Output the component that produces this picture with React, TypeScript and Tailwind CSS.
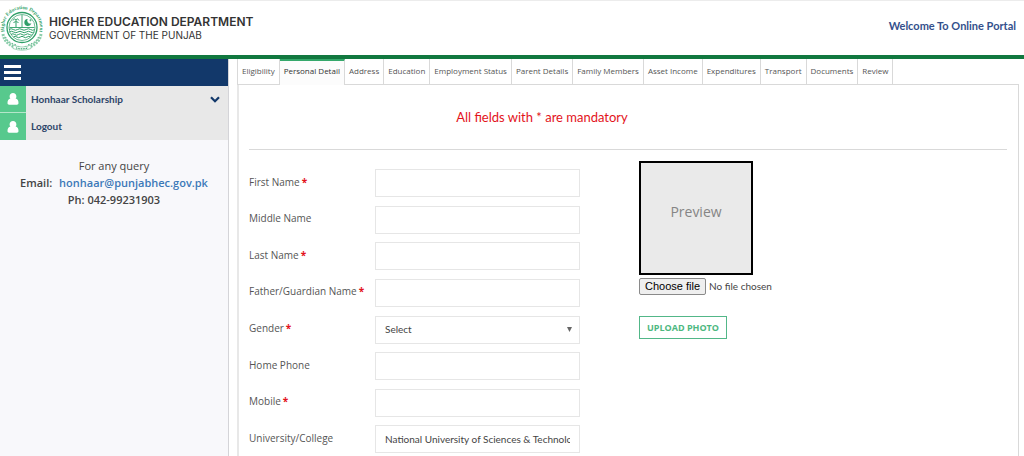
import { useState } from 'react';

const tabs = [
  'Eligibility',
  'Personal Detail',
  'Address',
  'Education',
  'Employment Status',
  'Parent Details',
  'Family Members',
  'Asset Income',
  'Expenditures',
  'Transport',
  'Documents',
  'Review',
];

type Field = {
  id: string;
  label: string;
  required?: boolean;
  kind?: 'select';
  value?: string;
};

const fields: Field[] = [
  { id: 'first-name', label: 'First Name', required: true },
  { id: 'middle-name', label: 'Middle Name' },
  { id: 'last-name', label: 'Last Name', required: true },
  { id: 'guardian-name', label: 'Father/Guardian Name', required: true },
  { id: 'gender', label: 'Gender', required: true, kind: 'select' },
  { id: 'home-phone', label: 'Home Phone' },
  { id: 'mobile', label: 'Mobile', required: true },
  { id: 'university', label: 'University/College', value: 'National University of Sciences & Technology' },
];

function Emblem() {
  return (
    <svg viewBox="0 0 44 46" className="h-[46px] w-11 shrink-0" fill="none" stroke="#2f9f68" aria-hidden="true">
      <circle cx="22" cy="22.5" r="15" strokeWidth="1.3" />
      <circle cx="22" cy="22.5" r="13" strokeWidth="0.7" />
      <path d="M22 10v13M9.5 22.5h25" strokeWidth="0.9" />
      <path d="M16 22v-7M13 15.500c1-2 2-2 3-.5 1-1.500 2-1.500 3 .5M13.500 18c1-1.500 2-1.500 2.500-1 .5-.5 1.500-.5 2.500 1" strokeWidth="1" />
      <path d="M27.500 14a3.500 3.500 0 1 0 3.700 4.600a3.200 3.200 0 0 1-3.700-4.600z" fill="#2f9f68" strokeWidth="0.2" />
      <path d="M30.500 14v2.400M29.300 15.200h2.400" strokeWidth="0.6" />
      <path
        d="M9 24.500q2.200-1.500 4.300 0t4.300 0 4.300 0 4.300 0 4.300 0 4.300 0M9.500 27q2.100-1.500 4.200 0t4.200 0 4.200 0 4.200 0 4.200 0 3.500 0M11 29.500q1.900-1.500 3.700 0t3.700 0 3.700 0 3.700 0 3.700 0 3 0M13.500 32q1.700-1.400 3.400 0t3.400 0 3.400 0 3.400 0 3.400 0"
        strokeWidth="1"
      />
      <path d="M3 29c1 7 7 13 16.500 13.500M41 29c-1 7-7 13-16.500 13.500" stroke="#8dceac" strokeWidth="3" strokeDasharray="2 1" />
      <path d="M5.500 32c2 4.500 6.500 7.500 12 8M38.500 32c-2 4.500-6.500 7.500-12 8" stroke="#69ba91" strokeWidth="1.200" strokeDasharray="1.500 1.500" />
      <path d="M13 40q9 4 18 0v3.500q-9 3.500-18 0z" fill="#fff" stroke="#69ba91" strokeWidth="0.6" />
      <path d="M16 42.800q6 2 12 0" strokeWidth="1.200" strokeDasharray="1 0.7" />
      <path id="emblem-arc" d="M5 28A18 18 0 1 1 39 28" stroke="none" />
      <text fill="#2f9f68" stroke="none" className="font-['Liberation_Serif',serif] text-[5px] font-bold">
        <textPath href="#emblem-arc" startOffset="50%" textAnchor="middle">
          Higher Education Department
        </textPath>
      </text>
    </svg>
  );
}

function UserIcon() {
  return (
    <svg viewBox="0 0 12 14" className="h-3.5 w-3" fill="#fff" aria-hidden="true">
      <path d="M6 1c2 0 3.400 1.500 3.400 3.400 0 .9-.3 1.600-.8 2.200 2 .4 2.900 2 2.900 4.400 0 1-.6 1.700-1.600 1.700H2.100C1.100 12.700.5 12 .5 11c0-2.400.9-4 2.900-4.400-.5-.6-.8-1.300-.8-2.200C2.600 2.500 4 1 6 1z" />
    </svg>
  );
}

function Sidebar() {
  return (
    <aside className="w-[229px] shrink-0 border-r border-[#d4d4d8] bg-[#f8f8fb]">
      <div className="flex h-[27px] items-center bg-[#12386a] px-1">
        <button type="button" aria-label="Toggle menu" className="flex w-[17px] flex-col gap-[3px]">
          <span className="h-[3px] bg-white" />
          <span className="h-[3px] bg-white" />
          <span className="h-[3px] bg-white" />
        </button>
      </div>
      <nav className="bg-[#e8e8e8] font-['Lato',sans-serif] text-[10px] font-bold text-[#2d4568]">
        <a href="#scholarship" className="flex h-[27px] items-stretch">
          <span className="flex w-[26px] items-center justify-center border-b border-[#b5e6ca] bg-[#57c98d]">
            <UserIcon />
          </span>
          <span className="flex flex-1 items-center justify-between pr-2 pl-[5px]">
            Honhaar Scholarship
            <svg viewBox="0 0 10 7" className="h-[7px] w-2.5" fill="none" stroke="#12386a" strokeWidth="2.2" aria-hidden="true">
              <path d="M1 1.200l4 4 4-4" />
            </svg>
          </span>
        </a>
        <a href="#logout" className="flex h-[27px] items-stretch">
          <span className="flex w-[26px] items-center justify-center bg-[#57c98d]">
            <UserIcon />
          </span>
          <span className="flex items-center pl-[5px]">Logout</span>
        </a>
      </nav>
      <div className="pt-[17px] text-center text-[11px] leading-[17px] text-[#444]">
        <p>For any query</p>
        <p className="font-semibold">
          Email:{' '}
          <a href="mailto:honhaar@punjabhec.gov.pk" className="ml-1 text-[#3c78b8]">
            honhaar@punjabhec.gov.pk
          </a>
        </p>
        <p className="font-semibold">Ph: 042-99231903</p>
      </div>
    </aside>
  );
}

function FormRow({ field }: { field: Field }) {
  const control =
    "h-7 w-[205px] border border-[#e6e6e6] bg-white px-[9px] font-['Lato',sans-serif] text-[10px] text-[#444] outline-none";
  return (
    <div className="flex items-center">
      <label htmlFor={field.id} className="w-[126px] shrink-0 pb-0.5 text-[10px] text-[#555]">
        {field.label}
        {field.required && <span className="ml-0.5 font-bold text-[#e3131b]">*</span>}
      </label>
      {field.kind === 'select' ? (
        <div className="relative">
          <select id={field.id} className={`${control} appearance-none`}>
            <option>Select</option>
            <option>Male</option>
            <option>Female</option>
          </select>
          <svg viewBox="0 0 5 5" className="pointer-events-none absolute top-3 right-2 h-[5px] w-[5px]" fill="#666" aria-hidden="true">
            <path d="M0 0h5L2.500 5z" />
          </svg>
        </div>
      ) : (
        <input id={field.id} type="text" defaultValue={field.value} className={control} />
      )}
    </div>
  );
}

function PhotoUpload() {
  const [fileName, setFileName] = useState('No file chosen');
  return (
    <div className="-mt-2">
      <div className="flex size-[114px] items-center justify-center border-2 border-black bg-[#eaeaea] pb-3.5 text-[14px] text-[#858585]">
        Preview
      </div>
      <div className="mt-[3px] flex items-center gap-[3px] font-['Lato',sans-serif] text-[10px] text-[#444]">
        <label
          htmlFor="photo"
          className="rounded-xs border border-[#8a8a8a] bg-[#efefef] px-[5px] font-['Liberation_Sans',Arial,sans-serif] text-[11px] leading-[15px] text-black"
        >
          Choose file
        </label>
        <input
          id="photo"
          type="file"
          className="sr-only"
          onChange={(e) => setFileName(e.target.files?.[0]?.name ?? 'No file chosen')}
        />
        <span>{fileName}</span>
      </div>
      <button
        type="button"
        className="mt-[21px] h-[23px] border border-[#52b788] bg-white px-[7px] text-[9px] font-bold text-[#4db87f] uppercase"
      >
        Upload Photo
      </button>
    </div>
  );
}

export default function App() {
  return (
    <div className="flex min-h-screen flex-col bg-white font-['Open_Sans','Noto_Sans',sans-serif]">
      <header className="flex h-[59px] items-center justify-between border-t border-b-4 border-t-[#ececec] border-b-[#11783f] pr-2">
        <div className="flex items-center gap-[5px]">
          <Emblem />
          <div className="font-['Inter',sans-serif] text-[#333]">
            <h1 className="text-[12px] leading-[14px] font-semibold">HIGHER EDUCATION DEPARTMENT</h1>
            <p className="text-[10px] leading-[13px]">GOVERNMENT OF THE PUNJAB</p>
          </div>
        </div>
        <p className="pb-1 font-['Lato',sans-serif] text-[11px] font-bold text-[#34508c]">Welcome To Online Portal</p>
      </header>
      <div className="flex flex-1">
        <Sidebar />
        <main className="ml-2 mr-[5px] flex min-w-0 flex-1 flex-col">
          <div role="tablist" className="flex h-[26px] border-b border-l border-[#d9d9d9]">
            {tabs.map((tab) => (
              <button
                key={tab}
                type="button"
                role="tab"
                aria-selected={tab === 'Personal Detail'}
                className="border-r border-[#d9d9d9] px-1 pb-0.5 text-[8px] whitespace-nowrap text-[#555] aria-selected:-mb-px aria-selected:border-t-2 aria-selected:border-t-[#35a86b] aria-selected:bg-[#fcfcfc] aria-selected:pb-1 aria-selected:text-[#333]"
              >
                {tab}
              </button>
            ))}
          </div>
          <section className="flex-1 border-r border-l-2 border-r-[#d9d9d9] border-l-[#e8e8e8] pr-[11px] pl-2.5">
            <p className="border-b border-[#d9d9d9] pt-[23px] pr-[172px] pb-[23px] text-center font-['Lato',sans-serif] text-[13px] leading-[18px] text-[#e3131b]">
              All fields with * are mandatory
            </p>
            <form className="flex items-start gap-[59px] pt-[19px]">
              <div className="flex h-[284px] flex-col justify-between">
                {fields.map((field) => (
                  <FormRow key={field.id} field={field} />
                ))}
              </div>
              <PhotoUpload />
            </form>
          </section>
        </main>
      </div>
    </div>
  );
}
